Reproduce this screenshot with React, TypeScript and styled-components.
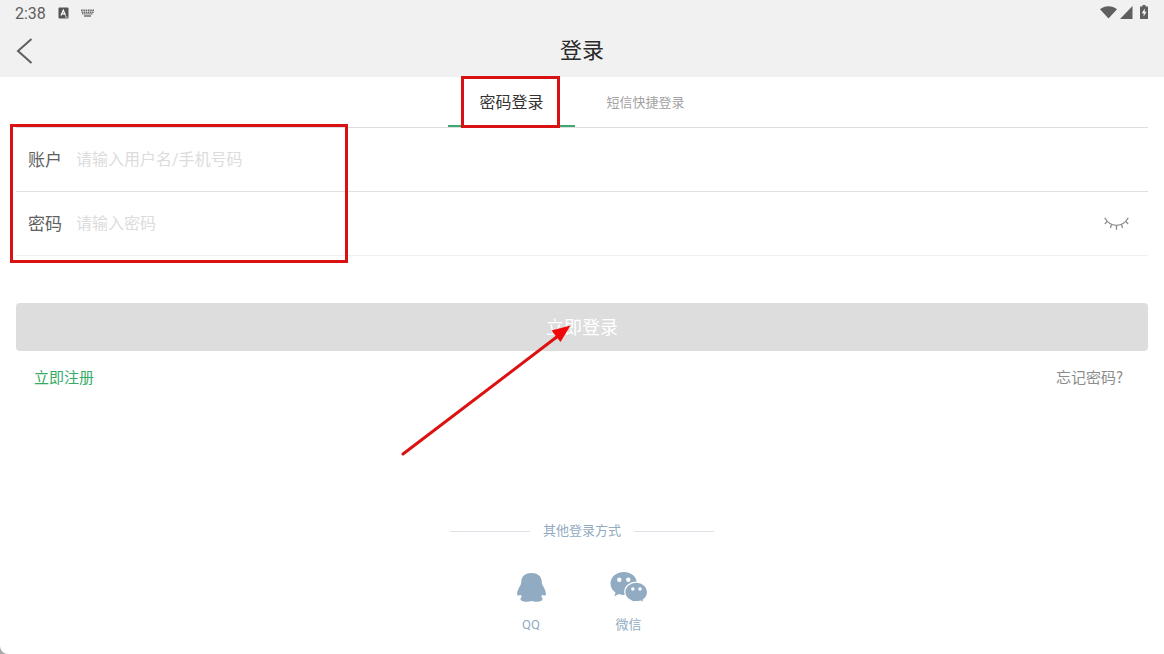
import React from "react";
import styled, { createGlobalStyle } from "styled-components";

const GlobalStyle = createGlobalStyle`
  * { box-sizing: border-box; }
  body {
    margin: 0;
    background: #a8a8a8;
    font-family: Roboto, "Noto Sans CJK SC", sans-serif;
    font-weight: 400;
  }
  button, input { font: inherit; }
`;

const Page = styled.div`
  min-height: 100vh;
  overflow: hidden;
  display: flex;
  flex-direction: column;
  background: #fff;
  border-bottom-left-radius: 8px;
`;

const TopArea = styled.div`
  background: #f1f1f1;
  color: #5f5f5f;
`;

const StatusBar = styled.div`
  display: flex;
  align-items: center;
  justify-content: space-between;
  height: 26px;
  padding: 0 16px 0 15px;
  font-size: 16px;
  line-height: 26px;
`;

const Clock = styled.span`
  padding-top: 2px;
`;

const StatusGroup = styled.div<{ $gap: number }>`
  display: flex;
  align-items: center;
  gap: ${(p) => p.$gap}px;
  svg { display: block; }
`;

const TitleBar = styled.header`
  display: grid;
  grid-template-columns: 48px 1fr 48px;
  align-items: center;
  height: 51px;
`;

const BackButton = styled.button`
  height: 50px;
  padding: 0 0 2px 16px;
  border: 0;
  background: none;
  color: #5f5f5f;
  cursor: pointer;
  svg { display: block; }
`;

const Title = styled.h1`
  margin: 0;
  padding-bottom: 2px;
  text-align: center;
  font-size: 22px;
  line-height: 48px;
  font-weight: 400;
  color: #2a2a2a;
`;

const Main = styled.main`
  flex: 1;
  display: flex;
  flex-direction: column;
  padding: 0 16px 19px;
`;

const Tabs = styled.div`
  display: flex;
  justify-content: center;
  height: 51px;
  border-bottom: 1px solid #dedede;
`;

const Tab = styled.button<{ $active?: boolean }>`
  position: relative;
  width: ${(p) => (p.$active ? 127 : 141)}px;
  padding: 0;
  border: 0;
  border-bottom: 2px solid ${(p) => (p.$active ? "#3fa870" : "transparent")};
  background: none;
  font-size: ${(p) => (p.$active ? 16 : 13)}px;
  color: ${(p) => (p.$active ? "#333" : "#a2a2a2")};
  cursor: pointer;
`;

const Highlight = styled.span<{ $inset: string }>`
  position: absolute;
  inset: ${(p) => p.$inset};
  border: 3px solid #d81212;
  pointer-events: none;
`;

const FormHighlight = styled(Highlight)`
  right: auto;
  width: 338px;
`;

const Fields = styled.div`
  position: relative;
`;

const Field = styled.div<{ $line: string }>`
  display: flex;
  align-items: center;
  gap: 12px;
  height: 64px;
  padding: 0 19px 0 12px;
  border-bottom: 1px solid ${(p) => p.$line};
`;

const FieldLabel = styled.label`
  width: 36px;
  padding-bottom: 2px;
  font-size: 17px;
  white-space: nowrap;
  color: #606060;
`;

const FieldInput = styled.input`
  flex: 1;
  min-width: 0;
  height: 48px;
  padding: 0;
  border: 0;
  outline: 0;
  background: none;
  font-size: 16px;
  color: #333;
  &::placeholder { color: #dcdcdc; opacity: 1; }
`;

const IconButton = styled.button`
  padding: 0;
  border: 0;
  background: none;
  color: #8c8c8c;
  cursor: pointer;
  svg { display: block; }
`;

const SubmitButton = styled.button`
  position: relative;
  height: 48px;
  margin-top: 47px;
  padding: 0 0 2px;
  border: 0;
  border-radius: 4px;
  background: #ddd;
  color: #fff;
  font-size: 18px;
  cursor: pointer;
`;

const Arrow = styled.svg`
  position: absolute;
  top: 20px;
  right: 50%;
  margin-right: 10px;
  pointer-events: none;
`;

const Links = styled.nav`
  display: flex;
  justify-content: space-between;
  padding: 14px 25px 0 18px;
  font-family: "Noto Sans CJK SC", sans-serif;
  font-size: 15px;
  line-height: 24px;
`;

const TextLink = styled.a<{ $color: string }>`
  color: ${(p) => p.$color};
  text-decoration: none;
`;

const OtherLogin = styled.section`
  margin-top: auto;
  display: flex;
  flex-direction: column;
  align-items: center;
  gap: 28px;
  color: #91abc3;
  font-size: 13px;
`;

const Divider = styled.h2`
  display: flex;
  align-items: center;
  gap: 13px;
  margin: 0;
  font-size: 13px;
  line-height: 20px;
  font-weight: 400;
  &::before, &::after {
    content: "";
    width: 80px;
    height: 1px;
    background: #dbe1e6;
  }
`;

const Providers = styled.div`
  display: flex;
  gap: 64px;
`;

const Provider = styled.button`
  display: flex;
  flex-direction: column;
  align-items: center;
  gap: 10px;
  padding: 0;
  border: 0;
  background: none;
  color: inherit;
  font-size: 13px;
  line-height: 20px;
  cursor: pointer;
  svg { display: block; }
`;

export default function App() {
  return (
    <>
      <GlobalStyle />
      <Page>
        <TopArea>
          <StatusBar>
            <StatusGroup $gap={12}>
              <Clock>2:38</Clock>
              <svg width="11" height="12" viewBox="0 0 11 12">
                <rect x="0.5" y="0.5" width="10" height="11" rx="1" fill="#555" />
                <path d="M3 8.5 5.3 3.2 7.6 8.5M3.8 6.8h3" fill="none" stroke="#fff" strokeWidth="1.2" />
                <path d="M7 10h2.5" stroke="#ddd" />
              </svg>
              <svg width="13" height="8" viewBox="0 0 13 8" fill="none" stroke="#666">
                <path d="M0 1.2h13" strokeDasharray="1.6 .7" strokeWidth="1.5" />
                <path d="M.6 3.2h12M1 4.9h11" strokeDasharray="1.5 .6" strokeWidth="1.4" />
                <path d="M3 7h7" strokeWidth="1.4" />
              </svg>
            </StatusGroup>
            <StatusGroup $gap={3}>
              <svg width="17" height="14" viewBox="0 0 17 14" fill="#5f5f5f">
                <path d="M0 3.2C4.8-.9 12.2-.9 17 3.2L8.5 12.600Z" />
              </svg>
              <svg width="13" height="14" viewBox="0 0 13 14" fill="#5f5f5f">
                <path d="M12.5 0v13H0Z" />
              </svg>
              <svg width="12" height="16" viewBox="0 0 12 16">
                <path d="M6.5 0h3v1.400H12V14H4V1.400h2.500Z" fill="#5f5f5f" />
                <path d="M8.800 3.600 5.600 8.200h2v3.200l3-4.600h-1.800Z" fill="#f1f1f1" />
              </svg>
            </StatusGroup>
          </StatusBar>
          <TitleBar>
            <BackButton type="button" aria-label="返回">
              <svg width="18" height="28" viewBox="0 0 18 28" fill="none" stroke="currentColor" strokeWidth="2">
                <path d="M15.5 2 2 14 15.5 26" />
              </svg>
            </BackButton>
            <Title>登录</Title>
          </TitleBar>
        </TopArea>

        <Main>
          <Tabs role="tablist">
            <Tab type="button" role="tab" aria-selected="true" $active>
              密码登录
              <Highlight $inset="-1px 15px -3px 13px" />
            </Tab>
            <Tab type="button" role="tab" aria-selected="false">短信快捷登录</Tab>
          </Tabs>

          <Fields>
            <Field $line="#e0e0e0">
              <FieldLabel htmlFor="account">账户</FieldLabel>
              <FieldInput id="account" type="text" placeholder="请输入用户名/手机号码" />
            </Field>
            <Field $line="#f0f0f0">
              <FieldLabel htmlFor="password">密码</FieldLabel>
              <FieldInput id="password" type="password" placeholder="请输入密码" />
              <IconButton type="button" aria-label="显示密码">
                <svg width="25" height="13" viewBox="0 0 25 13" fill="none" stroke="currentColor" strokeWidth="1.3">
                  <path d="M.7.8C6.2 10.8 18.8 10.8 24.3.8" />
                  <path d="M3.2 4.4.9 7M7.6 7.4 6.4 11M12.5 8.4v4.4M17.4 7.4l1.2 3.6M21.8 4.4 24.1 7" />
                </svg>
              </IconButton>
            </Field>
            <FormHighlight $inset="-4px auto -7px -6px" />
          </Fields>

          <SubmitButton type="button">
            立即登录
            <Arrow width="172" height="134" viewBox="0 0 172 134">
              <path d="M3 131 158 13" stroke="#dc1212" strokeWidth="3" strokeLinecap="round" />
              <path d="M170.5 2.500 151.500 7.500 160.500 19Z" fill="#f00808" />
            </Arrow>
          </SubmitButton>

          <Links>
            <TextLink href="#register" $color="#35ab68">立即注册</TextLink>
            <TextLink href="#forgot" $color="#8c8c8c">忘记密码?</TextLink>
          </Links>

          <OtherLogin>
            <Divider>其他登录方式</Divider>
            <Providers>
              <Provider type="button">
                <svg width="29" height="36" viewBox="0 0 29 36" fill="currentColor">
                  <path d="M14.500 4C8.500 4 4.600 7.200 4.300 12c-.1 1.600-.3 3.200-1 4.500C1.500 19.300.2 22 .1 24.800c0 1.500.5 2 1.200 1.700.7-.2 1.600-.5 2.600-.6.3.7.6 1.300 1 1.800-1 .6-1.400 1.400-1.400 2.300 0 1.800 2.600 2.700 5.600 2.700 2.200 0 4.200-.2 5.400-.7 1.200.5 3.200.7 5.400.7 3 0 5.600-.9 5.600-2.700 0-.9-.4-1.700-1.400-2.300.4-.5.7-1.100 1-1.800 1 .1 1.900.4 2.600.6.700.3 1.200-.2 1.200-1.700-.1-2.800-1.400-5.500-3.200-8.300-.7-1.300-.9-2.900-1-4.500C24.400 7.200 20.500 4 14.500 4Z" />
                </svg>
                QQ
              </Provider>
              <Provider type="button">
                <svg width="38" height="36" viewBox="0 0 38 36">
                  <path d="M13.800 3C6.200 3 .5 8 .5 14.600c0 3.800 1.900 6.900 5 9L4.300 27.300l4.700-2.200c1.500.6 3.200.9 4.800.9C21.400 26 27 21.200 27 14.600S21.400 3 13.800 3Z" fill="currentColor" />
                  <path d="M26.300 13.200c-6.300 0-11.500 4.200-11.500 9.700s5.200 9.800 11.500 9.800c1.500 0 2.900-.2 4.200-.6l3.600 1.800-1-3c2.800-1.700 4.500-4.600 4.500-8 0-5.500-5-9.700-11.300-9.700Z" fill="currentColor" stroke="#fff" strokeWidth="1.2" />
                  <g fill="#fff">
                    <circle cx="9.300" cy="10.700" r="2.200" />
                    <circle cx="18.300" cy="10.700" r="2.200" />
                    <circle cx="22.800" cy="20" r="1.700" />
                    <circle cx="30" cy="20" r="1.700" />
                  </g>
                </svg>
                微信
              </Provider>
            </Providers>
          </OtherLogin>
        </Main>
      </Page>
    </>
  );
}
